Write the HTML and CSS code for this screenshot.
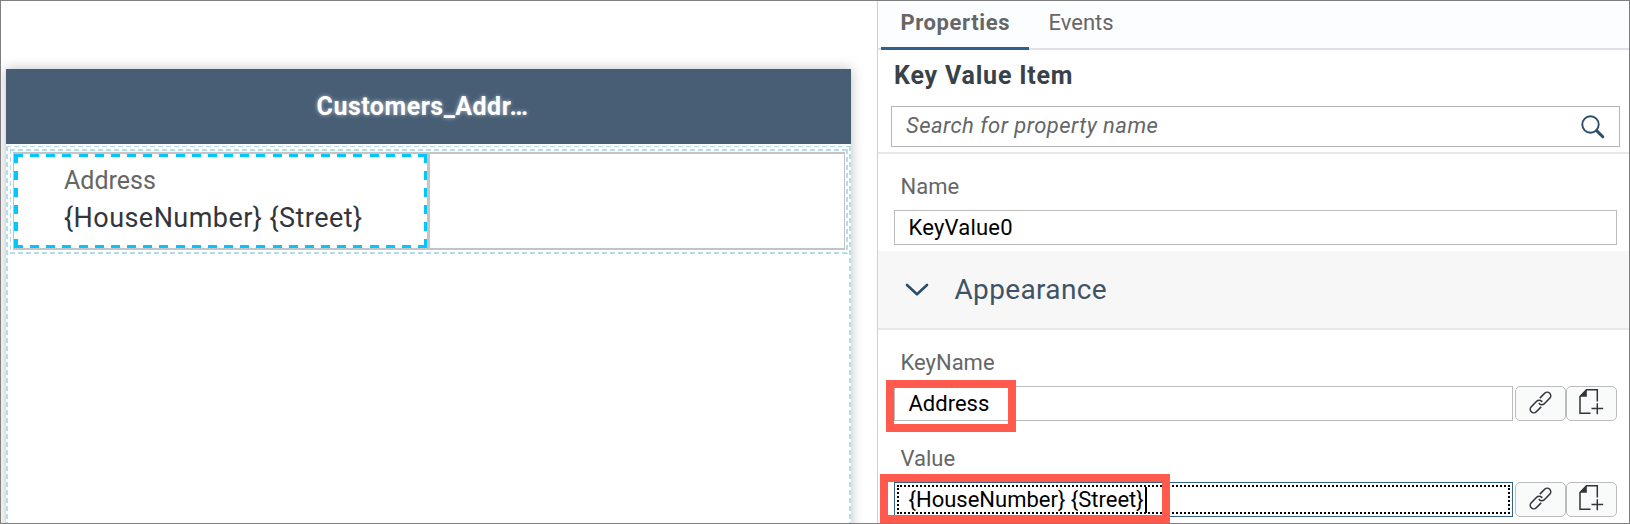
FILE: index.html
```html
<!DOCTYPE html>
<html lang="en">
<head>
<meta charset="utf-8">
<title>Key Value Item</title>
<link rel="stylesheet" href="styles.css">
</head>
<body>
<svg class="defs" width="0" height="0" aria-hidden="true">
  <symbol id="link" viewBox="0 0 24 24">
    <g fill="none" stroke="#32363a" stroke-width="1.5" transform="rotate(-45 12 12)">
      <path d="M9.500 15.400H2.900a3.400 3.400 0 0 1 0-6.800H10.200a3.400 3.400 0 0 1 3.400 3.400v.8"/>
      <path d="M14.500 8.600h6.600a3.400 3.400 0 0 1 0 6.800H13.800a3.400 3.400 0 0 1-3.400-3.400v-.8"/>
    </g>
  </symbol>
  <symbol id="add-doc" viewBox="0 0 26 28">
    <path d="M19.300 13.500V1.800H8.500L2 8.500V25.200H12.500" fill="none" stroke="#32363a" stroke-width="1.500"/>
    <path d="M8.800 1.200V8.800H1.200Z" fill="#32363a"/>
    <path d="M19.300 15.200V26.200M13.500 20.600H25.200" fill="none" stroke="#32363a" stroke-width="1.500"/>
  </symbol>
</svg>
<div class="frame">
  <main class="canvas">
    <section class="page">
      <header class="page-title">Customers_Addr…</header>
      <div class="page-body">
        <div class="container">
          <div class="grid">
            <div class="cell selected">
              <div class="key">Address</div>
              <div class="val">{HouseNumber} {Street}</div>
            </div>
            <div class="cell"></div>
          </div>
        </div>
      </div>
    </section>
  </main>
  <aside class="panel">
    <nav class="tabs">
      <div class="tab active">Properties</div>
      <div class="tab">Events</div>
    </nav>
    <div class="head">
      <h1 class="heading">Key Value Item</h1>
      <div class="search">
        <span class="placeholder">Search for property name</span>
        <svg class="magnifier" viewBox="0 0 24 24"><circle cx="9.500" cy="9.500" r="8.200" fill="none" stroke="#2b4d6b" stroke-width="1.900"/><path d="M15.600 15.600L21.800 21.800" stroke="#2b4d6b" stroke-width="3" stroke-linecap="round"/></svg>
      </div>
    </div>
    <div class="field field-name">
      <div class="label">Name</div>
      <div class="input kv">KeyValue0</div>
    </div>
    <div class="group">
      <svg class="chevron" viewBox="0 0 24 14"><path d="M2 2L12 11.300L22 2" fill="none" stroke="#2b4d6b" stroke-width="2.600" stroke-linecap="round" stroke-linejoin="round"/></svg>
      <span>Appearance</span>
    </div>
    <div class="field field-key">
      <div class="label">KeyName</div>
      <div class="row">
        <div class="input">Address</div>
        <div class="btn"><svg class="i-link"><use href="#link"/></svg></div>
        <div class="btn"><svg class="i-doc"><use href="#add-doc"/></svg></div>
        <div class="mark mark-key"></div>
      </div>
    </div>
    <div class="field field-value">
      <div class="label">Value</div>
      <div class="row">
        <div class="input focused">{HouseNumber} {Street}<i class="caret"></i></div>
        <div class="btn"><svg class="i-link"><use href="#link"/></svg></div>
        <div class="btn"><svg class="i-doc"><use href="#add-doc"/></svg></div>
        <div class="mark mark-value"></div>
      </div>
    </div>
  </aside>
</div>
</body>
</html>
```
FILE: styles.css
```css
* { box-sizing: border-box; }
body { margin: 0; font-family: Roboto, "Liberation Sans", sans-serif; font-size: 22px; color: #666; background: #fff; white-space: nowrap; }
.defs { position: absolute; }
.frame { display: flex; width: 1630px; height: 524px; border: 1px solid #7f7f7f; overflow: hidden; }

/* design canvas */
.canvas { width: 876px; padding: 68px 0 0 5px; overflow: hidden; }
.page { width: 845px; height: 500px; background: #fff; box-shadow: 0 0 12px rgba(0, 0, 0, .25); }
.page-title { height: 75px; background: #475e75; display: flex; align-items: center; justify-content: center; padding-right: 12px; color: #fff; font-size: 25px; font-weight: 700; letter-spacing: .5px; text-shadow: 0 0 4px rgba(255, 255, 255, .6); }
.page-body, .container {
  --h: repeating-linear-gradient(90deg, #b5dce8 0 5px, transparent 5px 8px);
  --v: repeating-linear-gradient(180deg, #b5dce8 0 5px, transparent 5px 8px);
  background: var(--h) top / 100% 1px no-repeat, var(--v) left / 2px 100% no-repeat, var(--v) right / 2px 100% no-repeat;
}
.page-body { margin-top: 2px; height: 440px; padding: 3px 3px 0 4px; }
.container { height: 105px; padding: 3px; background: var(--h) top / 100% 2px no-repeat, var(--h) bottom / 100% 2px no-repeat, var(--v) left / 1px 100% no-repeat, var(--v) right / 2px 100% no-repeat; }
.grid { display: flex; height: 98px; border: solid #c4c4c4; border-width: 2px 1px; }
.cell { flex: 1; }
.selected {
  --sh: repeating-linear-gradient(90deg, #00c8ff 0 9px, transparent 9px 16.16px);
  --sv: repeating-linear-gradient(180deg, #00c8ff 0 9px, transparent 9px 17px);
  flex: 0 0 416px; border-right: 3px solid #c4c4c4; padding: 12px 0 0 50px;
  background: var(--sh) top / 100% 3px no-repeat padding-box, var(--sh) bottom / 100% 3px no-repeat padding-box, var(--sv) left / 4px 100% no-repeat padding-box, var(--sv) right / 3px 100% no-repeat padding-box;
}
.key { font-size: 25px; line-height: 30px; }
.val { margin-top: 6px; font-size: 27px; line-height: 32px; letter-spacing: .45px; color: #32363a; }

/* properties panel */
.panel { width: 752px; border-left: 1px solid #d0d0d4; }
.tabs { display: flex; height: 49px; padding-left: 3px; background: #fcfdff; border-bottom: 2px solid #dfe0e8; }
.tab { height: 49px; padding: 8px 19.500px 0; line-height: 28px; }
.active { width: 148px; border-bottom: 3px solid #2f5f8a; font-weight: 700; letter-spacing: .6px; }
.head { height: 104px; border-bottom: 2px solid #e8e8e8; padding: 10px 9px 0 13px; }
.heading { margin: 0; height: 46px; padding: 1px 3px 0; font-size: 25px; line-height: 30px; letter-spacing: .8px; color: #384248; }
.search { display: flex; align-items: center; justify-content: space-between; height: 41px; border: 1px solid #b5b5b5; padding: 0 14px; font-style: italic; letter-spacing: .46px; }
.placeholder { padding-bottom: 2px; }
.magnifier { width: 24px; height: 24px; }
.field { padding: 0 12px 0 16px; }
.label { padding-left: 6.500px; line-height: 30px; height: 38px; }
.field-name { height: 97px; padding-top: 18px; }
.input { position: relative; flex: 1; height: 35px; border: 1px solid #bcbcbc; padding-left: 13.500px; line-height: 34px; color: #000; background: #fff; }
.kv { letter-spacing: .2px; }
.group { display: flex; align-items: center; height: 79px; background: #f7f7f7; border-bottom: 2px solid #e8e8e8; padding-left: 26.500px; gap: 26px; font-size: 28px; letter-spacing: .35px; color: #3f5266; }
.chevron { width: 24px; height: 14px; }
.field-key { height: 91px; padding-top: 18px; }
.field-value { padding-top: 23px; }
.row { position: relative; display: flex; }
.btn { display: flex; align-items: center; justify-content: center; width: 51px; height: 35px; border: 1px solid #bcbcbc; border-radius: 5px; background: #f9fafa; }
.input + .btn { margin-left: 2px; }
.i-link { width: 25px; height: 25px; overflow: visible; margin: 0 1px 3px 0; }
.i-doc { width: 26px; height: 28px; margin: 0 1px 3px 0; }
.focused { border-color: #346187; }
.focused::before { content: ""; position: absolute; inset: 2px; border: 2px dotted #000; }
.caret { position: absolute; left: 250px; top: 4px; width: 2px; height: 26px; background: #000; }
.mark { position: absolute; border: 8px solid #ff5a4d; }
.mark-key { left: -8px; top: -6px; width: 130px; height: 52px; }
.mark-value { left: -14px; top: -8px; width: 290px; height: 49px; }
```
